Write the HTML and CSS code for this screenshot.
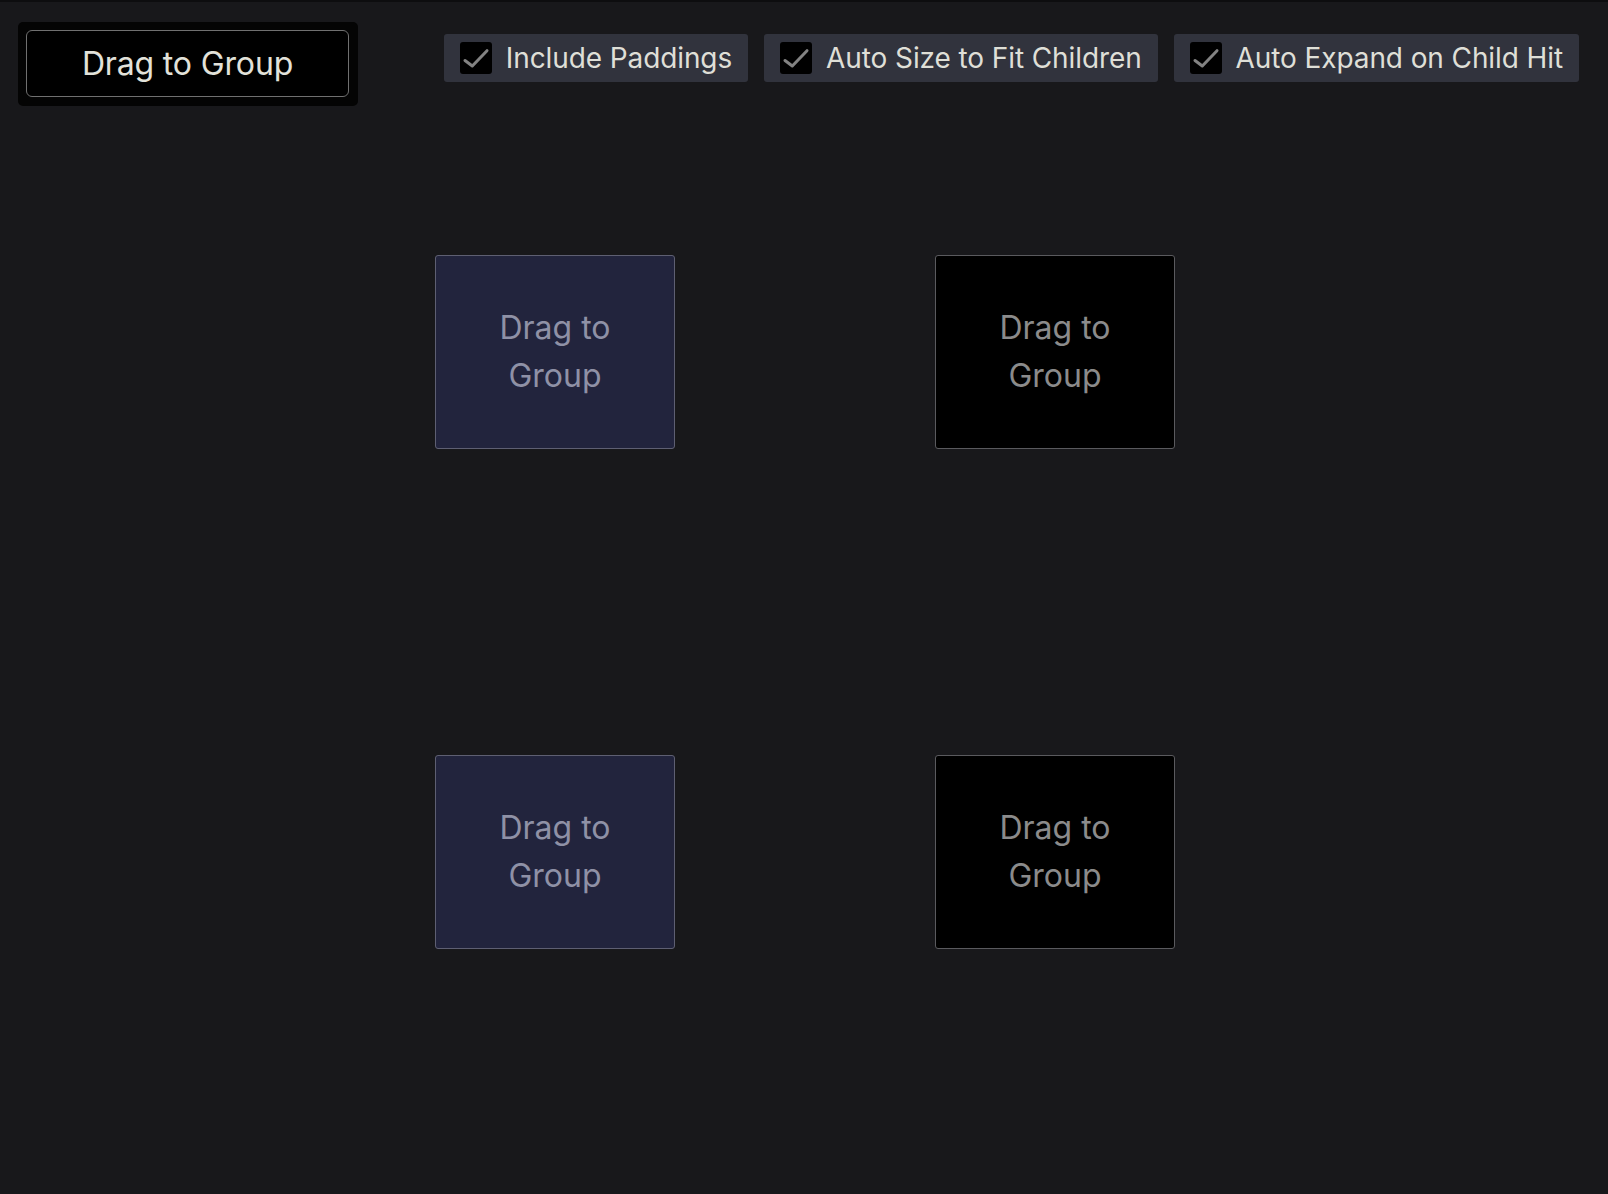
FILE: index.html
```html
<!DOCTYPE html>
<html lang="en">
<head>
<meta charset="utf-8">
<title>Drag to Group</title>
<link rel="stylesheet" href="styles.css">
</head>
<body>
<div class="app">
  <header class="toolbar">
    <div class="drag-source">
      <div class="drag-button">Drag to Group</div>
    </div>
    <div class="options">
      <label class="chip">
        <span class="check"><svg viewBox="0 0 32 32" width="32" height="32"><polyline points="5,18.5 12.3,24 27,8.7" fill="none" stroke="#828282" stroke-width="3" stroke-linecap="round" stroke-linejoin="round"/></svg></span>
        <span class="chip-label">Include Paddings</span>
      </label>
      <label class="chip">
        <span class="check"><svg viewBox="0 0 32 32" width="32" height="32"><polyline points="5,18.5 12.3,24 27,8.7" fill="none" stroke="#828282" stroke-width="3" stroke-linecap="round" stroke-linejoin="round"/></svg></span>
        <span class="chip-label">Auto Size to Fit Children</span>
      </label>
      <label class="chip">
        <span class="check"><svg viewBox="0 0 32 32" width="32" height="32"><polyline points="5,18.5 12.3,24 27,8.7" fill="none" stroke="#828282" stroke-width="3" stroke-linecap="round" stroke-linejoin="round"/></svg></span>
        <span class="chip-label">Auto Expand on Child Hit</span>
      </label>
    </div>
  </header>
  <main class="canvas">
    <div class="group group-blue">Drag to Group</div>
    <div class="group group-black">Drag to Group</div>
    <div class="group group-blue">Drag to Group</div>
    <div class="group group-black">Drag to Group</div>
  </main>
</div>
</body>
</html>
```

FILE: styles.css
```css
* { box-sizing: border-box; }
html, body {
  margin: 0;
  padding: 0;
  background: #18181b;
}
body {
  font-family: Inter, "Noto Sans", sans-serif;
}
.app {
  width: 1608px;
  height: 1194px;
  border-top: 2px solid #0d0d0f;
  overflow: hidden;
}
.toolbar {
  display: flex;
  justify-content: space-between;
  align-items: flex-start;
  padding: 20px 29px 0 18px;
}
.drag-source {
  width: 340px;
  height: 84px;
  background: #040404;
  border-radius: 5px;
  padding: 8px 9px 9px 8px;
}
.drag-button {
  height: 67px;
  border: 1.5px solid #707070;
  border-radius: 6px;
  background: #000;
  color: #e2e2da;
  font-size: 32px;
  letter-spacing: -0.15px;
  display: flex;
  align-items: center;
  justify-content: center;
}
.options {
  display: flex;
  gap: 16px;
  margin-top: 12px;
}
.chip {
  display: flex;
  align-items: center;
  gap: 14px;
  height: 48px;
  padding: 0 16px;
  background: #31333d;
  border-radius: 3px;
  color: #dfdfd7;
  font-size: 28px;
  letter-spacing: -0.1px;
  white-space: nowrap;
}
.check {
  width: 32px;
  height: 32px;
  background: #000;
  border-radius: 3px;
  display: block;
}
.check svg { display: block; }
.canvas {
  display: grid;
  grid-template-columns: 240px 240px;
  grid-auto-rows: 194px;
  column-gap: 260px;
  row-gap: 306px;
  padding: 149px 0 0 435px;
}
.group {
  border: 1px solid #5e5f72;
  border-radius: 3px;
  display: flex;
  align-items: center;
  justify-content: center;
  text-align: center;
  font-size: 32px;
  line-height: 48px;
  padding: 0 60px;
}
.group-blue {
  background: #22243d;
  color: #8f91a6;
}
.group-black {
  background: #000;
  border-color: #5a5a5e;
  color: #8b8b8b;
}
```
